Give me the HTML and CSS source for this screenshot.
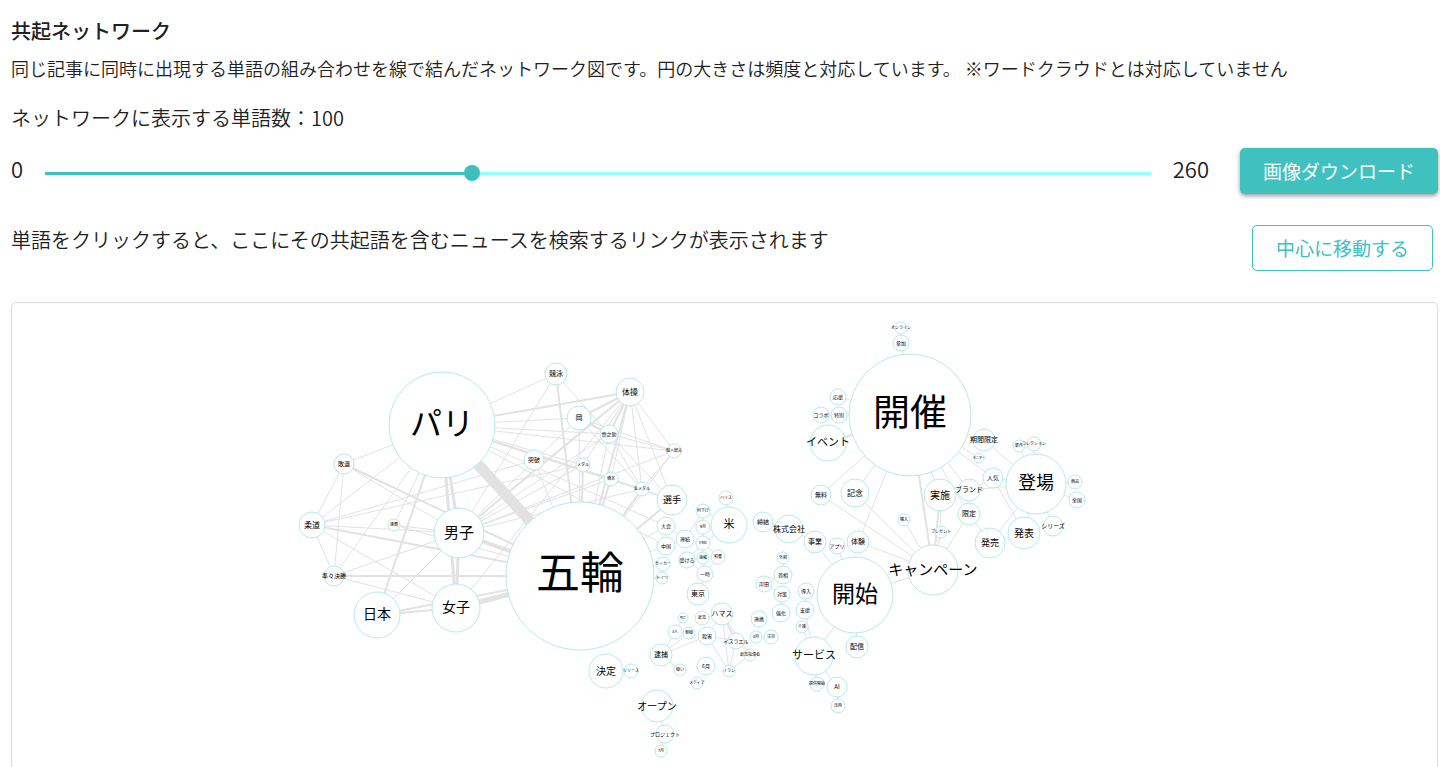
FILE: index.html
```html
<!DOCTYPE html>
<html lang="ja">
  <head>
    <meta charset="UTF-8" />
    <meta name="viewport" content="width=device-width, initial-scale=1.0" />
    <title>共起ネットワーク</title>
    <link rel="stylesheet" href="styles.css">
  </head>
  <body>
    <main class="page">
      <h2 class="title">共起ネットワーク</h2>
      <p class="description">同じ記事に同時に出現する単語の組み合わせを線で結んだネットワーク図です。円の大きさは頻度と対応しています。 ※ワードクラウドとは対応していません</p>
      <label class="count-label" for="wordCount">ネットワークに表示する単語数：<span id="wordCountValue">100</span></label>

      <!-- 単語数スライダー -->
      <div class="slider-row">
        <span class="limit">0</span>
        <input class="slider" type="range" id="wordCount" min="0" max="260" value="100" />
        <span class="limit">260</span>
        <button class="btn btn-download" type="button">画像ダウンロード</button>
      </div>

      <div class="link-row">
        <p class="hint">単語をクリックすると、ここにその共起語を含むニュースを検索するリンクが表示されます</p>
        <button class="btn btn-center" type="button">中心に移動する</button>
      </div>

      <!-- ネットワーク図 -->
      <div class="network">
        <svg id="graph" class="graph" viewBox="12 303 1425 464" preserveAspectRatio="xMidYMin slice" role="img" aria-label="共起ネットワーク">
          <g id="edges" class="edges"></g>
          <g id="nodes" class="nodes"></g>
        </svg>
      </div>
    </main>
    <script src="graph.js"></script>
  </body>
</html>
```

FILE: styles.css
```css
* {
  box-sizing: border-box;
}
body {
  margin: 0;
  background-color: #fff;
  color: #212121;
  font-family: 'Noto Sans CJK JP', sans-serif;
  font-weight: 350;
}
.page {
  display: flex;
  flex-direction: column;
  height: 100vh;
  padding: 16px 2px 0 11px;
  overflow: hidden;
}
.title {
  margin: 0;
  font-size: 20px;
  font-weight: 500;
  line-height: 30px;
}
.description {
  margin: 7px 0 0;
  font-size: 18px;
  line-height: 30px;
}
.count-label {
  margin-top: 20px;
  font-size: 20px;
  line-height: 30px;
}
.slider-row {
  display: flex;
  align-items: center;
  margin-top: 15px;
}
.limit {
  padding-bottom: 6px;
  font-size: 22px;
  line-height: 30px;
}
.slider {
  --fill: 38.5%;
  flex: 1;
  min-width: 0;
  height: 16px;
  margin: 4px 22px 0;
  appearance: none;
  background: transparent;
  cursor: pointer;
}
.slider::-webkit-slider-runnable-track {
  height: 3px;
  background: linear-gradient(to right, #3ec1c1 var(--fill), #96ffff var(--fill));
}
.slider::-webkit-slider-thumb {
  appearance: none;
  width: 16px;
  height: 16px;
  margin-top: -7px;
  border-radius: 50%;
  background-color: #3dbfbd;
}
.btn {
  height: 46px;
  padding: 0 23px 2px;
  border-radius: 5px;
  font-family: inherit;
  font-size: 19px;
  cursor: pointer;
}
.btn-download {
  margin-left: 31px;
  border: none;
  background-color: #3ec1bf;
  box-shadow: 0 2px 4px rgba(0, 0, 0, 0.4);
  color: #fff;
  font-weight: 400;
}
.btn-center {
  margin-right: 5px;
  border: 1px solid #3ec1bf;
  background-color: #fff;
  color: #3ec1bf;
  font-weight: 400;
}
.link-row {
  display: flex;
  justify-content: space-between;
  align-items: flex-start;
  margin-top: 31px;
}
.hint {
  margin: 0;
  font-size: 20px;
  line-height: 30px;
}
.network {
  flex: 1;
  min-height: 0;
  margin-top: 31px;
  border: 1px solid #ddd;
  border-bottom: none;
  border-radius: 5px 5px 0 0;
}
.graph {
  display: block;
  width: 100%;
  height: 100%;
}
.edges line {
  stroke: #e2e2e2;
}
.nodes circle {
  fill: #fff;
  stroke: #b5eaea;
}
.nodes text {
  fill: #000;
  font-weight: 400;
  text-anchor: middle;
  dominant-baseline: central;
  cursor: pointer;
}
```

FILE: graph.js
```js
// [単語, x, y, 半径]
const nodes = [
  ['パリ', 442, 425, 53], ['五輪', 580, 576, 74], ['敗退', 344, 464, 10],
  ['柔道', 312, 525, 13], ['連覇', 394, 525, 6], ['準々決勝', 334, 576, 10],
  ['日本', 377, 615, 23], ['男子', 459, 533, 25], ['女子', 456, 608, 24],
  ['競泳', 556, 374, 11], ['体操', 630, 392, 14], ['岡', 579, 418, 12],
  ['慎之助', 609, 434, 9], ['個人総合', 674, 451, 7], ['突破', 534, 460, 10],
  ['メダル', 583, 465, 7], ['橋本', 611, 479, 7], ['金メダル', 642, 489, 7],
  ['選手', 672, 500, 15], ['大会', 666, 526, 9], ['中国', 666, 546, 9],
  ['サッカー', 663, 564, 7], ['ドイツ', 662, 578, 6], ['連続', 685, 539, 9],
  ['受ける', 687, 560, 8], ['利下げ', 703, 511, 7], ['9月', 703, 527, 7],
  ['FRB', 703, 543, 7], ['速報', 703, 558, 6], ['影響', 718, 557, 7],
  ['一時', 705, 574, 8], ['東京', 698, 594, 11], ['米', 729, 525, 18],
  ['ハリス', 726, 498, 7], ['締結', 763, 522, 10], ['ハマス', 722, 614, 11],
  ['殺害', 707, 636, 9], ['イスラエル', 736, 641, 8], ['最高指導者', 750, 655, 6],
  ['イラン', 729, 671, 6], ['逮捕', 661, 655, 11], ['3人', 675, 632, 7],
  ['容疑', 689, 633, 6], ['死亡', 683, 618, 5], ['最高', 702, 618, 7],
  ['疑い', 680, 670, 6], ['6月', 706, 666, 9], ['メディア', 697, 683, 6],
  ['連携', 759, 619, 8], ['対策', 782, 594, 8], ['強化', 781, 613, 9],
  ['8月', 756, 637, 6], ['注目', 771, 637, 7], ['首相', 783, 575, 9],
  ['外相', 783, 558, 6], ['岸田', 764, 584, 8], ['決定', 606, 671, 17],
  ['リリース', 631, 671, 7], ['オープン', 657, 706, 16], ['プロジェクト', 665, 734, 9],
  ['7月', 661, 751, 6], ['株式会社', 789, 529, 14], ['事業', 815, 542, 11],
  ['アプリ', 837, 546, 8], ['体験', 858, 542, 11], ['無料', 821, 495, 10],
  ['記念', 855, 493, 14], ['購入', 904, 520, 6], ['導入', 806, 591, 8],
  ['支援', 805, 610, 9], ['介護', 802, 627, 6], ['開始', 855, 595, 38],
  ['サービス', 814, 656, 19], ['配信', 857, 647, 11], ['提供開始', 817, 684, 7],
  ['AI', 837, 687, 10], ['活用', 838, 706, 7], ['開催', 910, 415, 61],
  ['オンライン', 901, 328, 6], ['参加', 901, 343, 8], ['応援', 838, 397, 8],
  ['コラボ', 821, 415, 8], ['特別', 839, 415, 8], ['イベント', 828, 443, 18],
  ['期間限定', 984, 440, 11], ['モニター', 979, 458, 5], ['人気', 993, 478, 10],
  ['登場', 1036, 484, 30], ['新作', 1019, 446, 6], ['コレクション', 1034, 444, 7],
  ['ブランド', 969, 490, 11], ['実施', 940, 495, 16], ['限定', 969, 514, 11],
  ['発売', 990, 543, 15], ['発表', 1024, 533, 16], ['シリーズ', 1053, 526, 10],
  ['商品', 1075, 482, 7], ['全国', 1077, 500, 8], ['プレゼント', 941, 532, 6],
  ['キャンペーン', 933, 570, 25]
]

// 単語: { 共起語: 線の太さ }
const links = {
  'パリ': {
    '五輪': 11, '男子': 3, '女子': 3, '日本': 2, '敗退': 1, '柔道': 1, '準々決勝': 1, '連覇': 1,
    '競泳': 1, '体操': 2, '岡': 1, '慎之助': 1, '個人総合': 1, 'メダル': 1, '橋本': 2,
    '金メダル': 1, '選手': 1, '大会': 1, '中国': 1
  },
  '五輪': {
    '男子': 4, '女子': 5, '日本': 2, '敗退': 2, '柔道': 2, '準々決勝': 2, '連覇': 1,
    '競泳': 2, '体操': 2, '岡': 1, '慎之助': 1, '個人総合': 1, 'メダル': 2, '橋本': 2,
    '金メダル': 2, '選手': 2, '大会': 1, '中国': 1, 'サッカー': 1, 'ドイツ': 1, '突破': 1
  },
  '男子': {
    '女子': 3, '日本': 1, '柔道': 1, '連覇': 1, '敗退': 1, '準々決勝': 1, '体操': 2, '岡': 1,
    '慎之助': 1, '個人総合': 1, '競泳': 1, 'メダル': 1, '橋本': 1, '金メダル': 1
  },
  '女子': { '日本': 2, '柔道': 1, '準々決勝': 1, '体操': 1 },
  '柔道': { '敗退': 1, '準々決勝': 1, '突破': 1, 'メダル': 1 },
  '準々決勝': { '敗退': 1 },
  '体操': { '岡': 2, '慎之助': 2, '個人総合': 1, '橋本': 1, '金メダル': 1, '選手': 1, 'メダル': 1 },
  '岡': { '慎之助': 2, '個人総合': 1, '金メダル': 1 },
  '慎之助': { '個人総合': 1, '競泳': 1, '金メダル': 1, '選手': 1 },
  '金メダル': { '個人総合': 1, '選手': 1, '橋本': 1 },
  '連続': { '大会': 1, '中国': 1, '利下げ': 1, 'FRB': 1 },
  '米': { 'ハリス': 1, '利下げ': 1, 'FRB': 1 },
  'FRB': { '9月': 1, '速報': 1, '受ける': 1, '影響': 1 },
  '9月': { '利下げ': 1 },
  '一時': { '受ける': 1, '速報': 1, '影響': 1, '東京': 1 },
  '受ける': { '速報': 1 },
  '逮捕': { '3人': 1, '容疑': 1, '殺害': 1, '疑い': 1 },
  '3人': { '死亡': 1 },
  'ハマス': { '殺害': 1, 'イスラエル': 2, '最高指導者': 1, 'イラン': 1, '最高': 1 },
  '殺害': { 'イスラエル': 1, 'イラン': 1 },
  'イスラエル': { '最高指導者': 1, 'イラン': 1 },
  'イラン': { '最高指導者': 1 },
  '注目': { '8月': 1 },
  '首相': { '外相': 1, '岸田': 1 },
  '対策': { '岸田': 1, '強化': 1 },
  '決定': { 'リリース': 1 },
  'プロジェクト': { 'オープン': 1, '7月': 1 },
  '株式会社': { '締結': 1, '事業': 1 },
  '開始': { '事業': 1, 'アプリ': 1, 'キャンペーン': 1, '配信': 1, 'サービス': 1 },
  'サービス': { '支援': 1, '介護': 1, '提供開始': 1, 'AI': 1 },
  '支援': { '導入': 1 },
  'AI': { '活用': 1 },
  '開催': {
    '参加': 1, '応援': 1, '特別': 1, 'イベント': 2, '無料': 1, '記念': 1, '体験': 1,
    '実施': 1, 'キャンペーン': 2, 'ブランド': 1, '限定': 1, '人気': 1, 'モニター': 1
  },
  '参加': { 'オンライン': 1 },
  '特別': { 'コラボ': 1 },
  '登場': {
    '期間限定': 1, '新作': 1, 'コレクション': 1, '人気': 1, 'ブランド': 1, '商品': 1,
    '全国': 1, 'シリーズ': 1, '発表': 1, '発売': 1
  },
  '発売': { '限定': 1, '発表': 1 },
  '人気': { '発表': 1, 'ブランド': 1 },
  'キャンペーン': { '無料': 1, '記念': 1, '体験': 1, '購入': 1, '実施': 2, 'プレゼント': 1, '限定': 1 },
  '実施': { 'プレゼント': 1, 'ブランド': 1 }
}

const svgNs = 'http://www.w3.org/2000/svg'

function append(parent, tag, attrs) {
  const el = document.createElementNS(svgNs, tag)
  Object.keys(attrs).forEach(key => el.setAttribute(key, attrs[key]))
  parent.appendChild(el)
  return el
}

const edgeLayer = document.getElementById('edges')
const nodeLayer = document.getElementById('nodes')
const byName = {}
nodes.forEach(node => {
  byName[node[0]] = node
})

// 線
Object.keys(links).forEach(from => {
  Object.keys(links[from]).forEach(to => {
    const a = byName[from]
    const b = byName[to]
    append(edgeLayer, 'line', { x1: a[1], y1: a[2], x2: b[1], y2: b[2], 'stroke-width': links[from][to] })
  })
})

// 円と単語
nodes.forEach(([name, x, y, r]) => {
  append(nodeLayer, 'circle', { cx: x, cy: y, r: r })
  const text = append(nodeLayer, 'text', { x: x, y: y - Math.round(r / 12), 'font-size': Math.round(r * 0.6) })
  text.textContent = name
})

// スライダー
const slider = document.getElementById('wordCount')
slider.addEventListener('input', () => {
  document.getElementById('wordCountValue').textContent = slider.value
  slider.style.setProperty('--fill', (slider.value / slider.max) * 100 + '%')
})
```
